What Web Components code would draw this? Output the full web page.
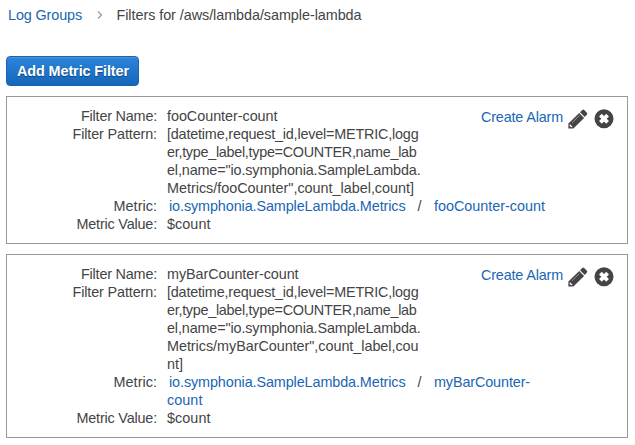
<!DOCTYPE html>
<html lang="en">
<head>
<meta charset="utf-8">
<title>Metric Filters</title>
<style>
body { margin: 0; background: #fff; color: #444; font: 14.4px/18px "Liberation Sans", Arial, sans-serif; }
</style>
</head>
<body>
<filters-page></filters-page>
<script>
const attach = (el, html) => { el.attachShadow({ mode: "open" }).innerHTML = html; };

/* A single run of text, tracked so that its advance equals the w attribute. */
customElements.define("fit-text", class extends HTMLElement {
  connectedCallback() {
    if (!this.shadowRoot) attach(this, `<style>
      :host { display: inline-block; white-space: pre; vertical-align: top; }
      :host([link]) { color: #1a66b3; cursor: pointer; }
    </style><slot></slot>`);
    const w = Number(this.getAttribute("w"));
    const natural = this.getBoundingClientRect().width;
    this.style.letterSpacing = (w - natural) / this.textContent.length + "px";
  }
});

customElements.define("bread-crumbs", class extends HTMLElement {
  connectedCallback() {
    attach(this, `<style>
      :host { display: flex; height: 18px; padding: 6px 0 0 8px; }
      svg { display: block; width: 8px; height: 10px; margin: 4px 12.5px 0 14px; }
    </style>
    <fit-text link w="74">Log Groups</fit-text>
    <svg viewBox="0 0 8 10"><path d="M2 1.5 5.5 5 2 8.5" fill="none" stroke="#999" stroke-width="1.2"/></svg>
    <fit-text w="245">Filters for /aws/lambda/sample-lambda</fit-text>`);
  }
});

customElements.define("primary-button", class extends HTMLElement {
  connectedCallback() {
    attach(this, `<style>
      :host { display: block; width: 133px; height: 30px; margin: 32px 0 10px 6px; }
      button { box-sizing: border-box; width: 100%; height: 100%; padding: 0 0 0 10px; text-align: left;
        border: 1px solid #1862b0; border-radius: 4px; color: #fff; font: inherit; font-weight: bold;
        background: linear-gradient(#2d84dc, #1566b9); box-shadow: inset 0 1px 0 #4895e0;
        text-shadow: 0 1px 1px rgba(0,0,0,.4); }
    </style><button><slot></slot></button>`);
  }
});

customElements.define("row-actions", class extends HTMLElement {
  connectedCallback() {
    attach(this, `<style>
      :host { display: flex; }
      fit-text { padding-top: 1px; }
      svg { display: block; width: 20px; height: 20px; margin-top: 2px; fill: #444; }
      .edit { margin-left: 5px; }
      .remove { margin-left: 6px; }
    </style>
    <fit-text link w="82">Create Alarm</fit-text>
    <svg class="edit" viewBox="0 0 20 20">
      <path d="M.4 19.4V14.6L11.2 4 16.1 8.9 5.4 19.4Z"/>
      <path d="M12 3.3 14.3 1Q15.2.1 16.2 1L18.9 3.7Q19.6 4.6 18.9 5.5L16.8 7.9Z"/>
      <path d="M4 13.8 11.6 6.3" stroke="#bbb" stroke-width=".7"/>
      <path d="M1.9 15.1 4.7 17.9 3.2 18.3 1.5 16.7Z" fill="#fff"/>
    </svg>
    <svg class="remove" viewBox="0 0 20 20">
      <circle cx="10" cy="9.7" r="9.5"/>
      <path d="M6.4 6.1 13.6 13.3M13.6 6.1 6.4 13.3" stroke="#fff" stroke-width="3.8"/>
    </svg>`);
  }
});

customElements.define("filter-field", class extends HTMLElement {
  connectedCallback() {
    attach(this, `<style>
      :host { display: grid; grid-template-columns: 140px 1fr; column-gap: 10px; }
      .label { text-align: right; }
      .value { display: flex; flex-direction: column; align-items: flex-start; }
    </style>
    <div class="label"><fit-text w="${this.getAttribute("w")}">${this.getAttribute("label")}</fit-text></div>
    <div class="value"><slot></slot></div>`);
  }
});

customElements.define("metric-path", class extends HTMLElement {
  connectedCallback() {
    attach(this, `<style>
      :host { display: flex; }
      ::slotted(*) { flex: none; }
      .sep { width: 4px; margin: 0 12.5px 0 12px; }
    </style><slot name="space"></slot><span class="sep">/</span><slot name="metric"></slot>`);
  }
});

customElements.define("filter-card", class extends HTMLElement {
  connectedCallback() {
    attach(this, `<style>
      :host { display: flex; justify-content: space-between; box-sizing: border-box; width: 622px;
        margin: 0 0 10px 6px; padding: 10px 13px 10px 10px; border: 1px solid #999; }
      .fields { width: 420px; }
    </style>
    <div class="fields"><slot></slot></div><row-actions></row-actions>`);
  }
});

customElements.define("filters-page", class extends HTMLElement {
  connectedCallback() {
    const shared = `<fit-text w="251.5">[datetime,request_id,level=METRIC,logg</fit-text>
      <fit-text w="249.5">er,type_label,type=COUNTER,name_lab</fit-text>
      <fit-text w="253.5">el,name="io.symphonia.SampleLambda.</fit-text>`;
    const card = (name, w, lines, path) => `<filter-card>
      <filter-field label="Filter Name:" w="76"><fit-text w="${w}">${name}</fit-text></filter-field>
      <filter-field label="Filter Pattern:" w="84.5">${shared}${lines}</filter-field>
      <filter-field label="Metric:" w="43.5">${path}</filter-field>
      <filter-field label="Metric Value:" w="80.5"><fit-text w="43.5">$count</fit-text></filter-field>
    </filter-card>`;
    const space = `<fit-text link slot="space" w="236.5" style="margin-left:2px">io.symphonia.SampleLambda.Metrics</fit-text>`;
    attach(this, `<style>:host { display: block; }</style>
    <bread-crumbs></bread-crumbs>
    <primary-button><fit-text w="112">Add Metric Filter</fit-text></primary-button>
    ${card("fooCounter-count", 110.5,
      `<fit-text w="247">Metrics/fooCounter",count_label,count]</fit-text>`,
      `<metric-path>${space}<fit-text link slot="metric" w="111">fooCounter-count</fit-text></metric-path>`)}
    ${card("myBarCounter-count", 131.5,
      `<fit-text w="251.5">Metrics/myBarCounter",count_label,cou</fit-text><fit-text w="16">nt]</fit-text>`,
      `<metric-path>${space}<fit-text link slot="metric" w="96">myBarCounter-</fit-text></metric-path><fit-text link w="35.5">count</fit-text>`)}`);
  }
});
</script>
</body>
</html>
